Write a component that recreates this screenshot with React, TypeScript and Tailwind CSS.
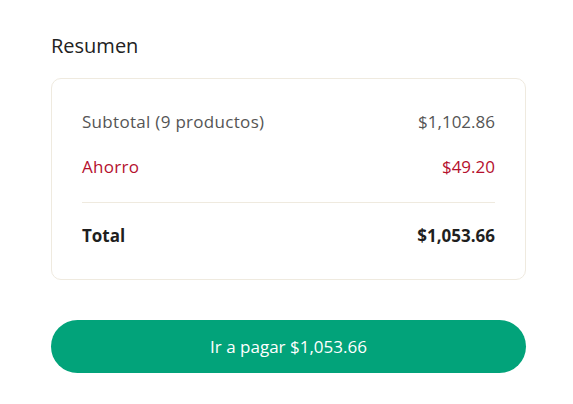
import React from "react";

const font = { fontFamily: "'Open Sans', 'Noto Sans', sans-serif" };

const App = () => {
  return (
    <div className="min-h-screen bg-white" style={font}>
      <div className="ml-[51px] w-[475px] pt-[34px]">
        {/* Heading */}
        <h2 className="text-[20px] leading-6 font-medium text-[#222]">Resumen</h2>

        {/* Summary card */}
        <div className="mt-[20px] rounded-[10px] border border-[#efeadf] px-[30px] pt-[31px] pb-[31px]">
          <div className="flex justify-between text-[17px] leading-6 text-[#555]">
            <span className="tracking-[0.3px]">Subtotal (9 productos)</span>
            <span>$1,102.86</span>
          </div>
          <div className="mt-[21px] flex justify-between text-[17px] leading-6 text-[#b5102e]">
            <span className="tracking-[0.3px]">Ahorro</span>
            <span>$49.20</span>
          </div>
          <div className="mt-[23px] h-px bg-[#efeadf]" />
          <div className="mt-[21px] flex justify-between text-[17px] leading-6 font-bold text-[#1f1f1f]">
            <span>Total</span>
            <span>$1,053.66</span>
          </div>
        </div>

        {/* Pay button */}
        <button className="mt-[40px] flex h-[53px] w-full items-center justify-center rounded-full bg-[#02a37a] text-[17px] font-medium text-white">
          Ir a pagar $1,053.66
        </button>
      </div>
    </div>
  );
};

export default App;
